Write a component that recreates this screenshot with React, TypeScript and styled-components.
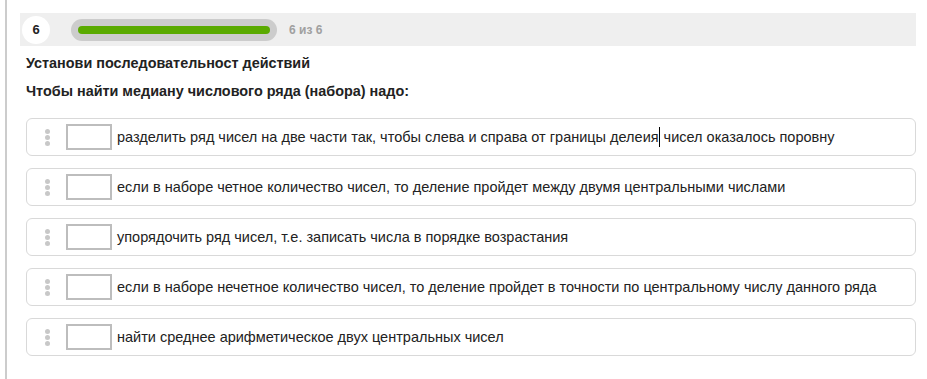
import React from 'react';
import styled, { createGlobalStyle } from 'styled-components';

const ITEMS = [
  {
    id: 1,
    before: 'разделить ряд чисел на две части так, чтобы слева и справа от границы делеия',
    after: ' чисел оказалось поровну',
    caret: true,
  },
  { id: 2, before: 'если в наборе четное количество чисел, то деление пройдет между двумя центральными числами' },
  { id: 3, before: 'упорядочить ряд чисел, т.е. записать числа в порядке возрастания' },
  { id: 4, before: 'если в наборе нечетное количество чисел, то деление пройдет в точности по центральному числу данного ряда' },
  { id: 5, before: 'найти среднее арифметическое двух центральных чисел' },
];

const GlobalStyle = createGlobalStyle`
  html, body {
    margin: 0;
    padding: 0;
    background: #fff;
    font-family: 'Liberation Sans', Arial, sans-serif;
  }
`;

export default function App() {
  return (
    <>
      <GlobalStyle />
      <Page>
        <Content>
          <Header>
            <StepNumber>6</StepNumber>
            <Track>
              <Fill style={{ width: `${(6 / 6) * 100}%` }} />
            </Track>
            <Counter>6 из 6</Counter>
          </Header>
          <Title>Установи последовательност действий</Title>
          <Question>Чтобы найти медиану числового ряда (набора) надо:</Question>
          <List>
            {ITEMS.map(item => (
              <Row key={item.id}>
                <Handle>
                  <Dot />
                  <Dot />
                  <Dot />
                </Handle>
                <Slot />
                <RowText>
                  {item.before}
                  {item.caret && <Caret />}
                  {item.after}
                </RowText>
              </Row>
            ))}
          </List>
        </Content>
      </Page>
    </>
  );
}

const Page = styled.div`
  width: 927px;
  height: 379px;
  box-sizing: border-box;
  padding-left: 5px;
  overflow: hidden;
`;

const Content = styled.div`
  height: 100%;
  border-left: 2px solid #cccccc;
  padding: 13px 11px 0 13px;
  box-sizing: border-box;
`;

const Header = styled.div`
  height: 33px;
  background: #efefef;
  display: flex;
  align-items: center;
  padding-left: 2px;
`;

const StepNumber = styled.div`
  width: 28px;
  height: 28px;
  border-radius: 50%;
  background: #fff;
  display: flex;
  align-items: center;
  justify-content: center;
  font-weight: bold;
  font-size: 13px;
  color: #222;
`;

const Track = styled.div`
  margin-left: 21px;
  width: 206px;
  height: 22px;
  box-sizing: border-box;
  padding: 7px;
  border-radius: 11px;
  background: #cccccc;
  display: flex;
`;

const Fill = styled.div`
  height: 8px;
  border-radius: 4px;
  background: #5aaa00;
`;

const Counter = styled.div`
  margin-left: 12px;
  font-size: 12px;
  font-weight: bold;
  color: #a0a0a0;
`;

const Title = styled.div`
  margin: 9px 0 0 6px;
  font-size: 14.4px;
  font-weight: bold;
  color: #222;
  line-height: 16px;
`;

const Question = styled(Title)`
  margin-top: 12px;
`;

const List = styled.div`
  margin: 19px 0 0 6px;
  display: flex;
  flex-direction: column;
  gap: 12px;
`;

const Row = styled.div`
  height: 38px;
  box-sizing: border-box;
  border: 1px solid #d9d9d9;
  border-radius: 6px;
  display: flex;
  align-items: center;
  padding-left: 18px;
`;

const Handle = styled.div`
  display: flex;
  flex-direction: column;
  gap: 1px;
  width: 5px;
`;

const Dot = styled.span`
  width: 5px;
  height: 5px;
  border-radius: 50%;
  background: #c8c8c8;
`;

const Slot = styled.div`
  margin-left: 16px;
  width: 46px;
  height: 26px;
  box-sizing: border-box;
  border: 2px solid #bdbdbd;
  background: #fff;
`;

const RowText = styled.div`
  margin-left: 5px;
  font-size: 14.5px;
  color: #222;
  white-space: nowrap;
`;

const Caret = styled.span`
  display: inline-block;
  width: 1px;
  height: 20px;
  background: #000;
  vertical-align: -5px;
`;
